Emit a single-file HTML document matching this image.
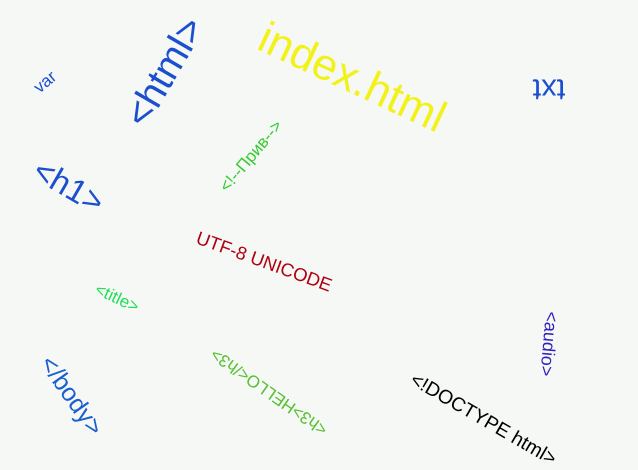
<!DOCTYPE html>
<html><head><meta charset="utf-8"><style>
html,body{margin:0;padding:0}
body{width:638px;height:461px;background:#f6f8f5;position:relative;overflow:hidden;font-family:"Liberation Sans","DejaVu Sans",sans-serif}
.t{position:absolute;white-space:nowrap;transform-origin:center;line-height:1}
</style></head><body>
<div class="t" style="left:45px;top:82px;color:#1a4fd0;font-size:17px;transform:translate(-50%,-50%) rotate(-40deg)">var</div>
<div class="t" style="left:165px;top:72px;color:#1a4fd0;font-size:39px;transform:translate(-50%,-50%) rotate(-60deg)">&lt;html&gt;</div>
<div class="t" style="left:352px;top:78px;color:#f2f21a;font-size:44px;transform:translate(-50%,-50%) rotate(25deg)">index.html</div>
<div class="t" style="left:549px;top:90px;color:#1a4fd0;font-size:31px;transform:translate(-50%,-50%) rotate(180deg)">txt</div>
<div class="t" style="left:69px;top:186px;color:#1a4fd0;font-size:33px;transform:translate(-50%,-50%) rotate(30deg)">&lt;h1&gt;</div>
<div class="t" style="left:251px;top:156px;color:#33cc33;font-size:17px;transform:translate(-50%,-50%) rotate(-50deg)">&lt;!--Прив--&gt;</div>
<div class="t" style="left:264px;top:262px;color:#b00010;font-size:18.5px;transform:translate(-50%,-50%) rotate(20deg)">UTF-8 UNICODE</div>
<div class="t" style="left:117px;top:298px;color:#22dd55;font-size:17px;transform:translate(-50%,-50%) rotate(25deg)">&lt;title&gt;</div>
<div class="t" style="left:549px;top:344px;color:#3020c0;font-size:18px;transform:translate(-50%,-50%) rotate(95deg)">&lt;audio&gt;</div>
<div class="t" style="left:71px;top:396px;color:#1a5fd0;font-size:25px;transform:translate(-50%,-50%) rotate(55deg)">&lt;/body&gt;</div>
<div class="t" style="left:269px;top:392px;color:#55c030;font-size:17px;transform:translate(-50%,-50%) rotate(215deg)">&lt;h3&gt;HELLO&lt;/h3&gt;</div>
<div class="t" style="left:483px;top:420px;color:#000;font-size:19.5px;transform:translate(-50%,-50%) rotate(30deg)">&lt;!DOCTYPE html&gt;</div>
</body></html>
